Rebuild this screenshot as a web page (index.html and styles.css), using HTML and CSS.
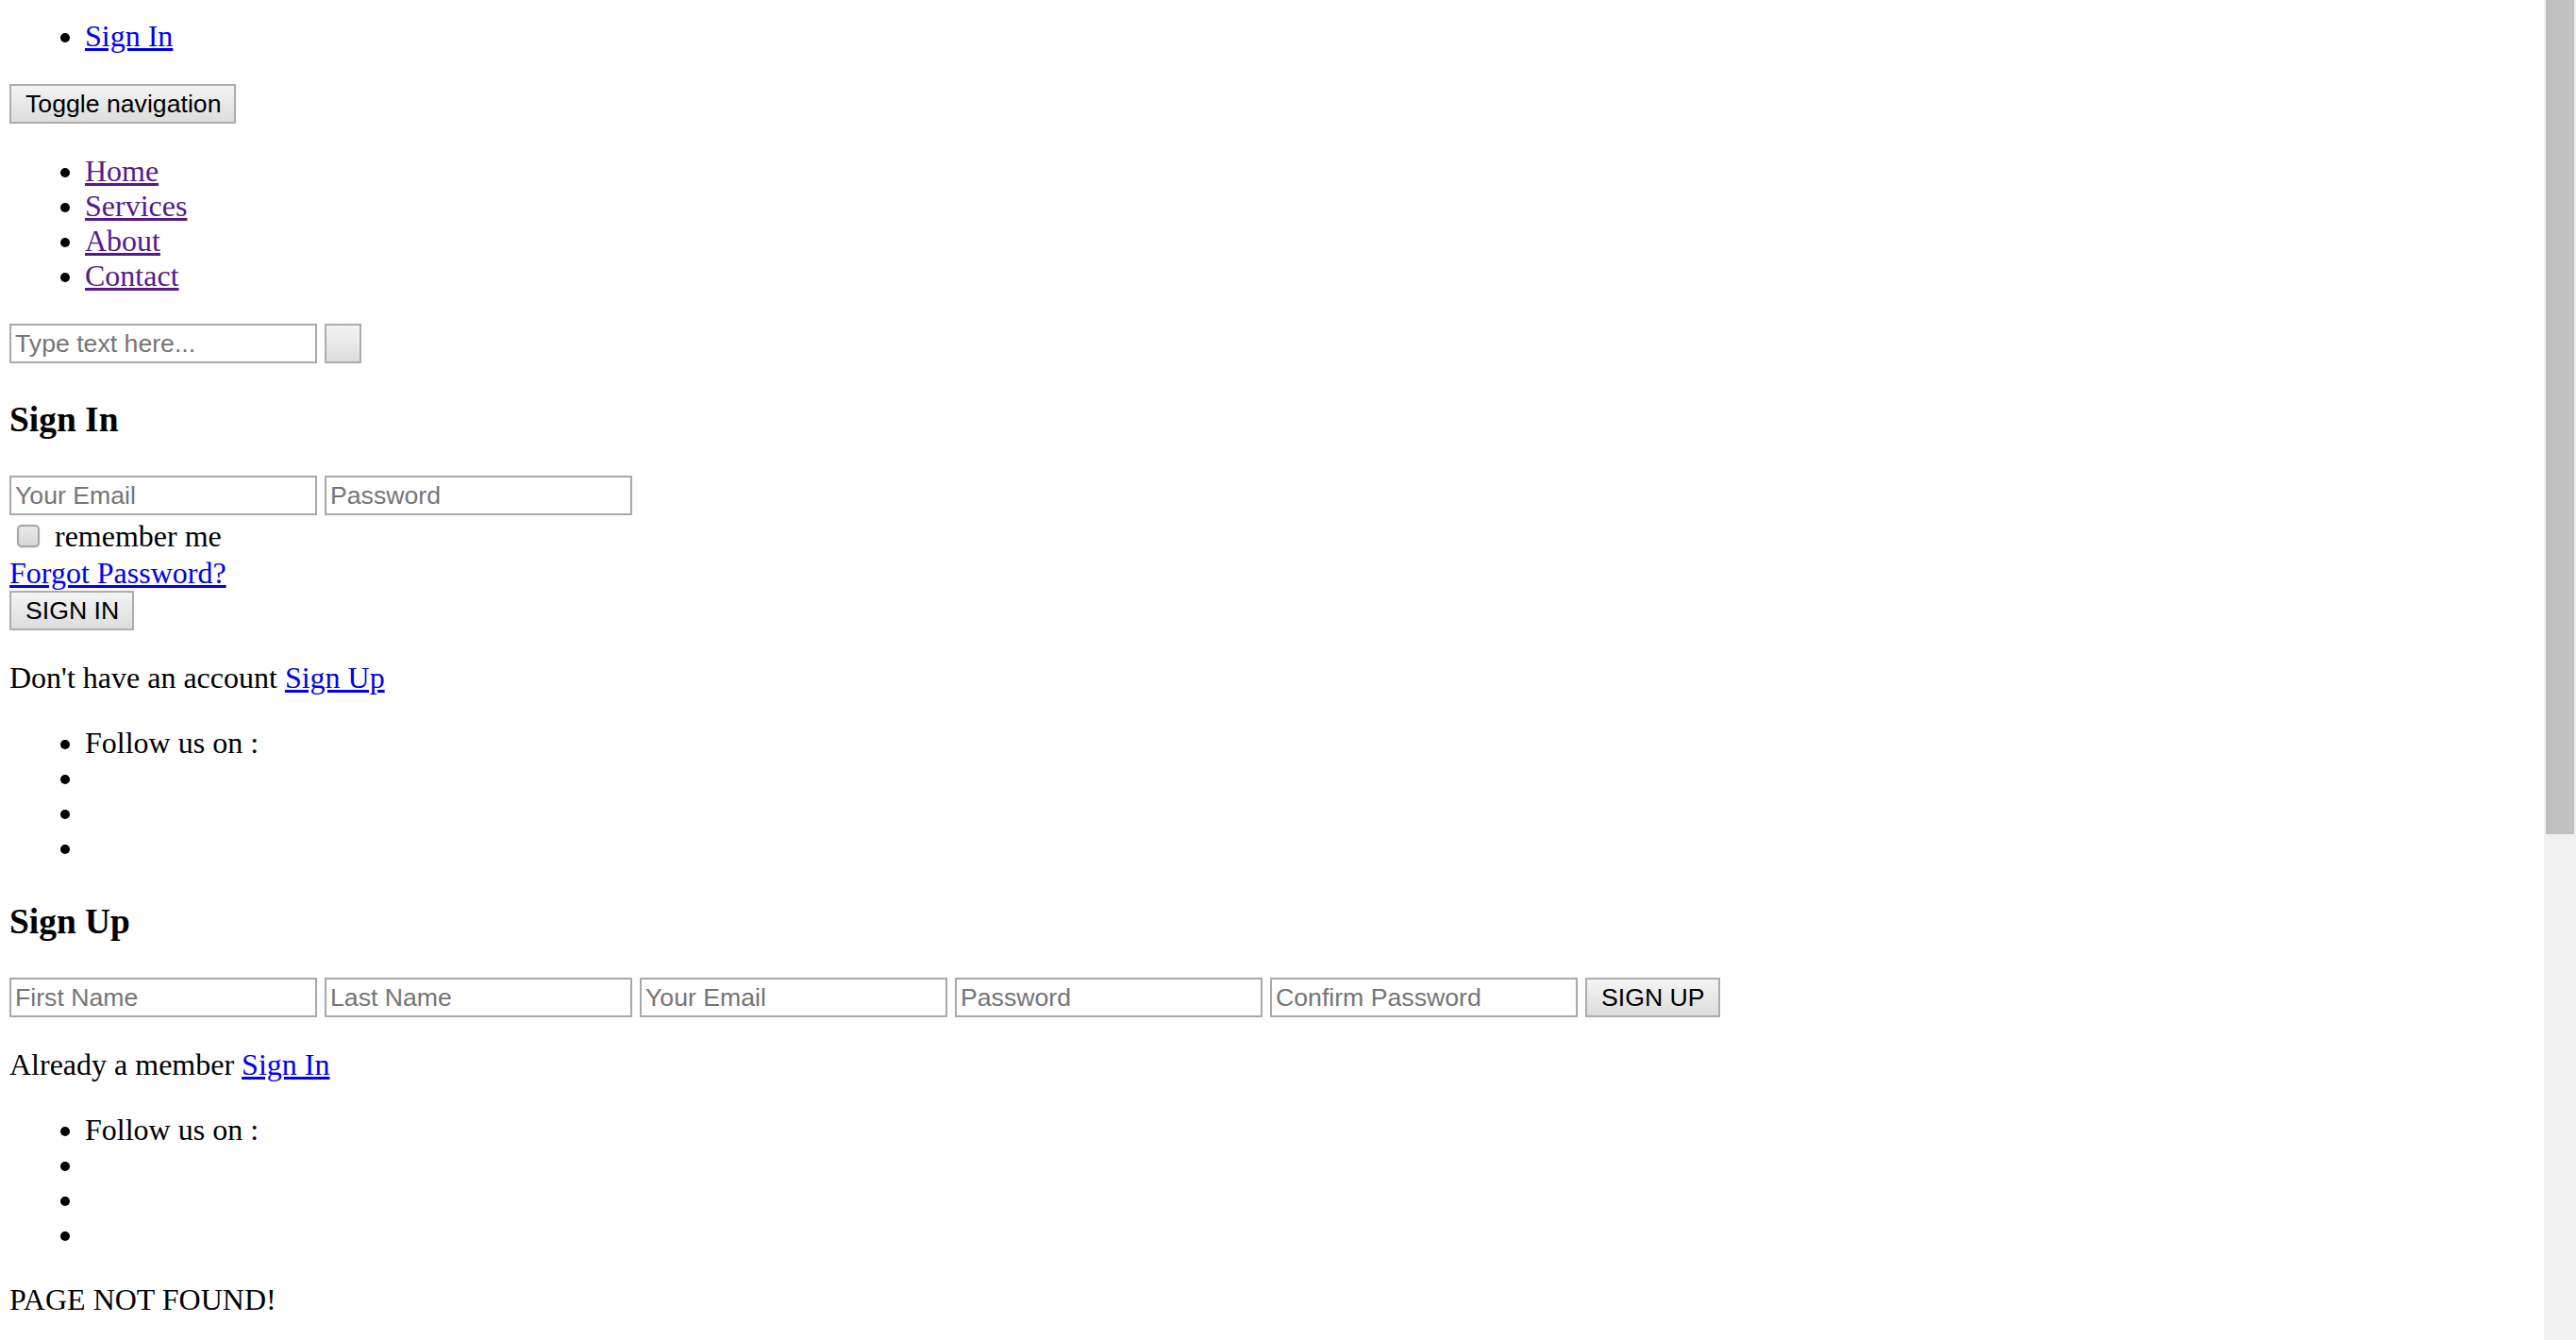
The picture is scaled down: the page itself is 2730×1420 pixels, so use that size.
FILE: index.html
```html
<!DOCTYPE html>
<html lang="en">
<head>
  <meta charset="UTF-8" />
  <meta name="viewport" content="width=device-width, initial-scale=1.0"/>
  <title>Page Not Found</title>
  <link rel="stylesheet" href="styles.css">
</head>
<body>

  <ul class="top-links">
    <li><a href="#signin">Sign In</a></li>
  </ul>

  <button class="btn toggle">Toggle navigation</button>

  <ul class="nav">
    <li><a class="visited" href="#">Home</a></li>
    <li><a class="visited" href="#">Services</a></li>
    <li><a class="visited" href="#">About</a></li>
    <li><a class="visited" href="#">Contact</a></li>
  </ul>

  <form class="row">
    <input type="text" placeholder="Type text here..."/>
    <button type="button" class="btn search-btn"></button>
  </form>

  <!-- Sign in -->
  <h3 id="signin">Sign In</h3>
  <form>
    <div class="row">
      <input type="email" placeholder="Your Email"/>
      <input type="password" placeholder="Password"/>
    </div>
    <label class="remember"><input type="checkbox"/>remember me</label>
    <a class="forgot" href="#">Forgot Password?</a>
    <button type="button" class="btn">SIGN IN</button>
  </form>
  <p>Don't have an account <a href="#signup">Sign Up</a></p>
  <ul class="social">
    <li>Follow us on :</li>
    <li><a href="#"></a></li>
    <li><a href="#"></a></li>
    <li><a href="#"></a></li>
  </ul>

  <!-- Sign up -->
  <h3 id="signup">Sign Up</h3>
  <form class="row">
    <input type="text" placeholder="First Name"/>
    <input type="text" placeholder="Last Name"/>
    <input type="email" placeholder="Your Email"/>
    <input type="password" placeholder="Password"/>
    <input type="password" placeholder="Confirm Password"/>
    <button type="button" class="btn">SIGN UP</button>
  </form>
  <p>Already a member <a href="#signin">Sign In</a></p>
  <ul class="social">
    <li>Follow us on :</li>
    <li><a href="#"></a></li>
    <li><a href="#"></a></li>
    <li><a href="#"></a></li>
  </ul>

  <p>PAGE NOT FOUND!</p>

  <div class="page-bottom"></div>

  <!-- scrollbar as it shows in the window -->
  <div class="scrollbar" aria-hidden="true"><div class="scrollbar-thumb"></div></div>

</body>
</html>
```

FILE: styles.css
```css
body {
  font-family: "Liberation Serif", "Times New Roman", serif;
  font-size: 32px;
  line-height: 37px;
  color: #000;
  background: #fff;
  margin: 0 10px;
}
a {
  color: #0000ee;
}
a.visited {
  color: #551a8b;
}
ul {
  margin: 32px 0;
  padding-left: 80px;
}
.top-links {
  margin-top: 20px;
}
p {
  margin: 32px 0;
}
h3 {
  font-size: 37.44px;
  line-height: 43px;
  font-weight: bold;
  margin: 38px 0;
}
form {
  margin: 0;
}
.row {
  display: flex;
  gap: 8px;
  align-items: flex-start;
}
input[type="text"], input[type="email"], input[type="password"] {
  box-sizing: border-box;
  width: 326px;
  height: 42px;
  margin: 0;
  padding: 0 4px;
  border: 2px solid #a9a9a9;
  font-family: "Liberation Sans", Arial, sans-serif;
  font-size: 26.67px;
  color: #000;
  background: #fff;
}
input::placeholder {
  color: #757575;
}
.btn {
  display: block;
  box-sizing: border-box;
  height: 42px;
  margin: 0;
  padding: 0 14px 0 15px;
  border: 2px solid #adadad;
  background: linear-gradient(#f4f4f4, #dddddd);
  font-family: "Liberation Sans", Arial, sans-serif;
  font-size: 26.67px;
  color: #000;
}
.search-btn {
  width: 39px;
}
.remember {
  display: flex;
  align-items: center;
  height: 42px;
  margin-top: 1px;
}
.remember input {
  appearance: none;
  -webkit-appearance: none;
  box-sizing: border-box;
  width: 24px;
  height: 24px;
  margin: 0 16px 0 8px;
  border: 2px solid #a6a6a6;
  border-radius: 5px;
  background: linear-gradient(#e8e8e8, #d8d8d8);
  box-shadow: 0 1px 2px rgba(0,0,0,0.12);
}
.forgot {
  display: block;
  width: max-content;
}
.page-bottom {
  height: 855px;
}
.scrollbar {
  position: fixed;
  top: 0;
  right: 0;
  width: 34px;
  height: 100%;
  background: #f0f0f0;
}
.scrollbar-thumb {
  height: 884px;
  margin: 0 2px;
  background: #c1c1c1;
}
```
